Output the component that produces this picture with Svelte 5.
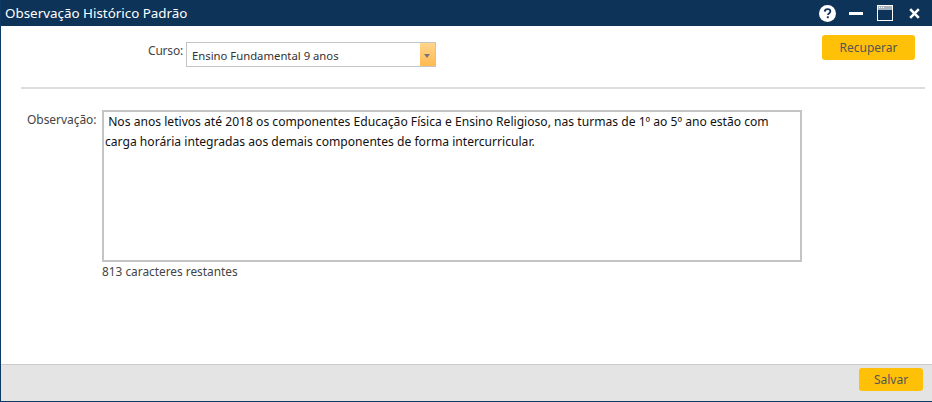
<script>
    let course = 'Ensino Fundamental 9 anos';
    let maxLength = 1000;
    let note = ' Nos anos letivos até 2018 os componentes Educação Física e Ensino Religioso, nas turmas de 1º ao 5º ano estão com carga horária integradas aos demais componentes de forma intercurricular.';
    let remaining = 813;
</script>

<div class="window">
    <header class="titlebar">
        <span class="title">Observação Histórico Padrão</span>
        <div class="controls">
            <svg class="help" width="17" height="17" viewBox="0 0 16 16">
                <circle cx="8" cy="8" r="8" fill="#fff" />
                <path d="M5.4 6.2C5.5 4.6 6.6 3.8 8.1 3.8c1.5 0 2.6.8 2.6 2.1 0 1-.6 1.5-1.3 2-.6.4-.9.7-.9 1.5" fill="none" stroke="#0d3358" stroke-width="1.7" />
                <rect x="7.4" y="10.6" width="1.8" height="1.8" fill="#0d3358" />
            </svg>
            <span class="minimize"></span>
            <svg class="maximize" width="16" height="16" viewBox="0 0 16 16">
                <rect x="0.5" y="0.5" width="15" height="15" fill="#0d3358" stroke="#fff" />
                <rect x="1" y="1" width="14" height="4" fill="#a9b3bd" />
                <path d="M2 2.5h1M4 2.5h1M6 2.5h1" stroke="#fff" />
            </svg>
            <svg class="close" width="11" height="11" viewBox="0 0 11 11">
                <path d="M1.2 1.2l8.6 8.6M9.8 1.2l-8.6 8.6" stroke="#fff" stroke-width="2.6" />
            </svg>
        </div>
    </header>

    <main class="content">
        <div class="top">
            <div class="field">
                <label for="curso">Curso:</label>
                <div class="select" id="curso">
                    <span class="select-value">{course}</span>
                    <span class="select-arrow"></span>
                </div>
            </div>
            <button class="btn recover">Recuperar</button>
        </div>
        <hr />
        <div class="note">
            <label for="obs">Observação:</label>
            <div class="note-body">
                <textarea id="obs" maxlength={maxLength} value={note}></textarea>
                <span class="counter">{remaining} caracteres restantes</span>
            </div>
        </div>
    </main>

    <footer class="footer">
        <button class="btn save">Salvar</button>
    </footer>
</div>

<style>
    :global(body) {
        margin: 0;
        background: #fff;
    }

    .window {
        width: 932px;
        height: 402px;
        box-sizing: border-box;
        display: flex;
        flex-direction: column;
        border-left: 1px solid #0d3b66;
        border-bottom: 1px solid #0d3b66;
        font-family: 'Noto Sans', sans-serif;
        font-size: 12px;
        color: #444;
        overflow: hidden;
    }

    .titlebar {
        height: 26px;
        margin-left: -1px;
        flex: none;
        display: flex;
        align-items: center;
        justify-content: space-between;
        background: #0d3358;
        color: #fff;
        padding: 0 12px 0 5px;
    }

    .title {
        font-size: 13.4px;
    }

    .controls {
        display: flex;
        align-items: center;
    }

    .help {
        margin-right: 13px;
    }

    .minimize {
        width: 14px;
        height: 3px;
        background: #fff;
        margin-right: 14px;
    }

    .maximize {
        margin-right: 16px;
    }

    .content {
        flex: 1;
        display: flex;
        flex-direction: column;
    }

    .top {
        display: flex;
        justify-content: space-between;
        align-items: flex-start;
        padding: 9px 17px 0 0;
        height: 61px;
        box-sizing: border-box;
    }

    .field {
        display: flex;
        align-items: flex-start;
        padding: 7px 0 0 147px;
    }

    .field label {
        width: 38px;
        letter-spacing: -0.2px;
        line-height: 18px;
    }

    .select {
        width: 250px;
        height: 25px;
        box-sizing: border-box;
        border: 1px solid #c4c4c4;
        display: flex;
        justify-content: space-between;
        color: #333;
    }

    .select-value {
        padding: 3px 0 0 5px;
        line-height: 20px;
        font-size: 11.3px;
    }

    .select-arrow {
        width: 15px;
        position: relative;
        background: linear-gradient(#ffd58c, #ffba52);
    }

    .select-arrow::after {
        content: '';
        position: absolute;
        left: 4px;
        top: 11px;
        border: 3.5px solid transparent;
        border-top: 4px solid #777;
        border-bottom: 0;
    }

    .btn {
        border: none;
        border-radius: 3px;
        background: #ffc107;
        color: #555;
        font-family: inherit;
        font-size: 12px;
        padding: 0;
    }

    .recover {
        width: 93px;
        height: 25px;
    }

    hr {
        margin: 0 7px 0 20px;
        border: none;
        height: 2px;
        background: #ddd;
    }

    .note {
        display: flex;
        align-items: flex-start;
        margin-top: 21px;
        padding-left: 26px;
    }

    .note label {
        width: 75px;
        flex: none;
        line-height: 18px;
        padding-top: 1px;
        letter-spacing: -0.05px;
    }

    .note-body {
        display: flex;
        flex-direction: column;
    }

    textarea {
        width: 700px;
        height: 152px;
        box-sizing: border-box;
        border: 2px solid #c4c4c4;
        outline: none;
        resize: none;
        padding: 0 1px;
        margin: 0;
        font-family: inherit;
        font-size: 12.12px;
        line-height: 20px;
        color: #111;
        display: block;
    }

    .counter {
        line-height: 18px;
        font-size: 11.85px;
    }

    .footer {
        height: 37px;
        flex: none;
        box-sizing: border-box;
        border-top: 1px solid #ccc;
        background: #e4e4e4;
        display: flex;
        justify-content: flex-end;
        align-items: flex-start;
        padding: 3px 9px 0 0;
    }

    .save {
        width: 64px;
        height: 23px;
    }
</style>
